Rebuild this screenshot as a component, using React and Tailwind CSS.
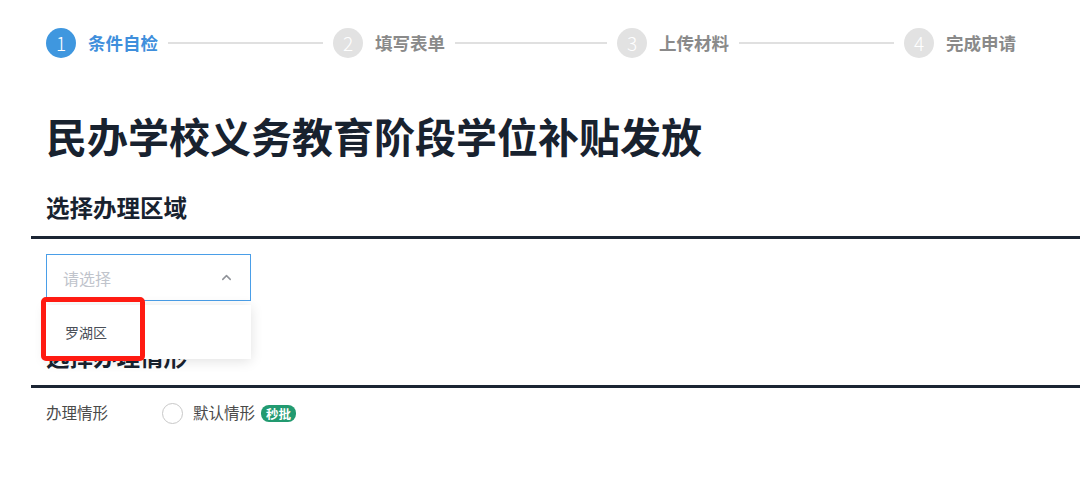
import { ChevronUp } from 'lucide-react'

const steps = [
  { n: 1, label: '条件自检', line: 'w-[155px]' },
  { n: 2, label: '填写表单', line: 'w-[152px]' },
  { n: 3, label: '上传材料', line: 'w-[155px]' },
  { n: 4, label: '完成申请', line: null },
]

const Steps = () => (
  <div className="flex items-center pl-[46px] pt-[28px] h-[58px]">
    {steps.map((s, i) => {
      const active = i === 0
      return (
        <div key={s.n} className="flex items-center">
          <div
            className={
              active
                ? 'w-[30px] h-[30px] rounded-full bg-[#3f97df] text-white flex items-center justify-center text-[19px] font-light'
                : 'w-[30px] h-[30px] rounded-full bg-[#e2e2e2] text-white flex items-center justify-center text-[19px] font-light'
            }
          >
            {s.n}
          </div>
          <span
            className={
              active
                ? 'ml-[12px] text-[17.5px] font-bold text-[#3f8fdc] leading-[30px]'
                : 'ml-[12px] text-[17.5px] font-bold text-[#8a8a8a] leading-[30px]'
            }
          >
            {s.label}
          </span>
          {s.line && <div className={`ml-[10px] mr-[10px] h-[2px] bg-[#e0e0e0] ${s.line}`}></div>}
        </div>
      )
    })}
  </div>
)

const App = () => {
  return (
    <div
      className="w-[1080px] h-[479px] bg-white overflow-hidden"
      style={{ fontFamily: '"Noto Sans CJK SC", "Noto Sans", sans-serif' }}
    >
      <Steps />

      <div className="pl-[46px]">
        <h1 className="mt-[52px] text-[41px] leading-[50px] font-bold text-[#18222f]">
          民办学校义务教育阶段学位补贴发放
        </h1>

        <h2 className="mt-[31px] text-[23.5px] leading-[32px] font-bold text-[#18222f]">选择办理区域</h2>
        <div className="mt-[13px] -ml-[15px] h-[3px] bg-[#1b2533]"></div>

        <div className="relative mt-[15px] w-[205px]">
          <div className="h-[47px] border border-[#4a9ee8] flex items-center justify-between pl-[16px] pr-[16px]">
            <span className="text-[16px] text-[#c0c4cc]">请选择</span>
            <ChevronUp size={15} strokeWidth={2.4} className="text-[#909399]" />
          </div>

          <div className="absolute left-0 top-[51px] w-[205px] bg-white py-[10px] shadow-[0_2px_12px_rgba(0,0,0,0.12)] z-10">
            <div className="h-[34px] leading-[34px] px-[19px] text-[14px] text-[#4a4f57]">罗湖区</div>
          </div>

          <div className="absolute -left-[5px] top-[43px] w-[104px] h-[64px] border-[5px] border-[#ff1b12] rounded-[5px] z-20"></div>
        </div>

        <h2 className="mt-[39px] text-[23.5px] leading-[32px] font-bold text-[#18222f]">选择办理情形</h2>
        <div className="mt-[13px] -ml-[15px] h-[3px] bg-[#1b2533]"></div>

        <div className="mt-[10px] h-[30px] flex items-center text-[15.5px] text-[#4a4a4a]">
          <span className="w-[116px]">办理情形</span>
          <span className="w-[21px] h-[21px] rounded-full border border-[#c8c8c8] bg-white"></span>
          <span className="ml-[10px]">默认情形</span>
          <span className="ml-[6px] h-[17px] px-[5px] rounded-[8px] bg-[#229a70] text-white text-[12.5px] font-bold leading-[17px]">
            秒批
          </span>
        </div>
      </div>
    </div>
  )
}

export default App
